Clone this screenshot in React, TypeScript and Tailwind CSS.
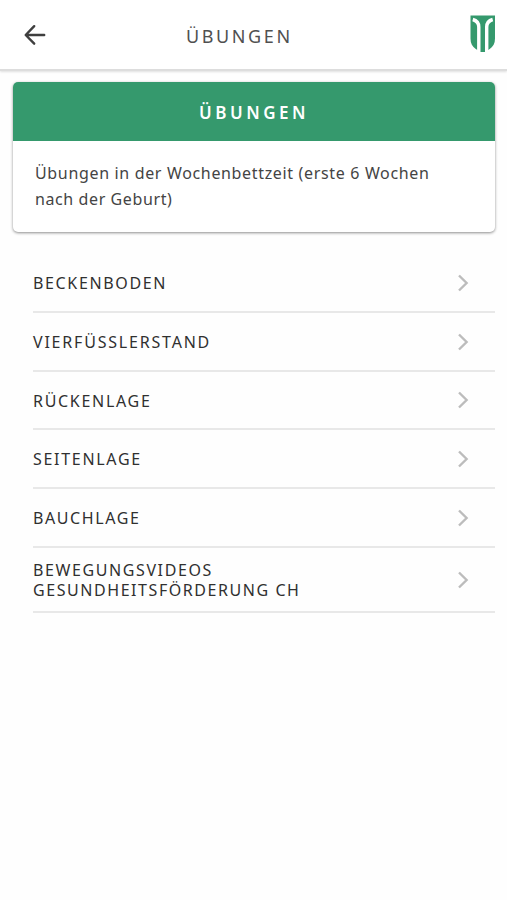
import { type ReactElement } from 'react';

type Exercise = {
  lines: { text: string; spacing: string }[];
  height: string;
};

const exercises: Exercise[] = [
  { lines: [{ text: 'BECKENBODEN', spacing: 'tracking-[1.65px]' }], height: 'h-[59px]' },
  { lines: [{ text: 'VIERFÜSSLERSTAND', spacing: 'tracking-[1.8px]' }], height: 'h-[59px]' },
  { lines: [{ text: 'RÜCKENLAGE', spacing: 'tracking-[1.7px]' }], height: 'h-[58px]' },
  { lines: [{ text: 'SEITENLAGE', spacing: 'tracking-[1.7px]' }], height: 'h-[59px]' },
  { lines: [{ text: 'BAUCHLAGE', spacing: 'tracking-[1.6px]' }], height: 'h-[59px]' },
  {
    lines: [
      { text: 'BEWEGUNGSVIDEOS', spacing: 'tracking-[1.6px]' },
      { text: 'GESUNDHEITSFÖRDERUNG CH', spacing: 'tracking-[1.56px]' },
    ],
    height: 'h-[65px]',
  },
];

function BackArrow(): ReactElement {
  return (
    <svg width="22" height="22" viewBox="0 0 22 22" fill="none" stroke="#3f3f3f" strokeWidth="2.4" strokeLinecap="round" strokeLinejoin="round">
      <path d="M10.2 2.2 1.7 11l8.5 8.7M2 11h18.2" />
    </svg>
  );
}

/** Wappen mit zwei weissen Streifen */
function Logo(): ReactElement {
  return (
    <svg width="26" height="38" viewBox="0 0 26 38">
      <path d="M.5.5H25v23c0 5-1.8 8-5.3 10.500l-3.200 2v1H9v-1l-3.200-2C2.300 31.500.5 28.500.5 23.500z" fill="#35996d" />
      <path d="M2.800 4.500c4.200 1.200 6 3.500 6 7.500v26M22.700 4.500c-4.200 1.200-6 3.500-6 7.500v26" fill="none" stroke="#fff" strokeWidth="3.400" />
    </svg>
  );
}

function Chevron(): ReactElement {
  return (
    <svg width="12" height="18" viewBox="0 0 12 18" fill="none" stroke="#bcbcbc" strokeWidth="2.4">
      <path d="M2 1.500 9.600 9 2 16.500" />
    </svg>
  );
}

export default function App(): ReactElement {
  return (
    <div className="min-h-[900px] bg-[#fefefe] font-['Noto_Sans',sans-serif] text-[#303030]">
      <header className="h-[71px] grid grid-cols-[162px_1fr_auto] items-center pl-6 pr-[11px] bg-white border-b-2 border-[#dddddd] shadow-[0_1px_2px_rgba(0,0,0,0.12)]">
        <button type="button" aria-label="Zurück">
          <BackArrow />
        </button>
        <h1 className="pt-0.5 text-[18px] leading-6 font-normal tracking-[2.6px] text-[#505050]">ÜBUNGEN</h1>
        <div className="pb-0.5">
          <Logo />
        </div>
      </header>

      <main>
        <section className="mt-[11px] ml-[13px] mr-3 h-[150px] rounded-[5px] overflow-hidden bg-white shadow-[0_1px_3px_rgba(0,0,0,0.45)]">
          <h2 className="h-[59px] pt-0.5 flex items-center justify-center bg-[#35996d] text-white text-[17px] font-semibold tracking-[3.5px]">
            ÜBUNGEN
          </h2>
          <p className="pt-[19px] pl-[22px] text-base leading-[26px] text-[#444444]">
            <span className="block whitespace-nowrap tracking-[0.66px]">Übungen in der Wochenbettzeit (erste 6 Wochen</span>
            <span className="block whitespace-nowrap tracking-[0.6px]">nach der Geburt)</span>
          </p>
        </section>

        <ul className="mt-[22px] ml-[33px] mr-3">
          {exercises.map((exercise) => (
            <li
              key={exercise.lines[0].text}
              className={`${exercise.height} flex items-center justify-between pr-[26px] border-b-2 border-[#e8e8e8]`}
            >
              <div className="pt-px text-base leading-5">
                {exercise.lines.map((line) => (
                  <span key={line.text} className={`block whitespace-nowrap ${line.spacing}`}>{line.text}</span>
                ))}
              </div>
              <Chevron />
            </li>
          ))}
        </ul>
      </main>
    </div>
  );
}
